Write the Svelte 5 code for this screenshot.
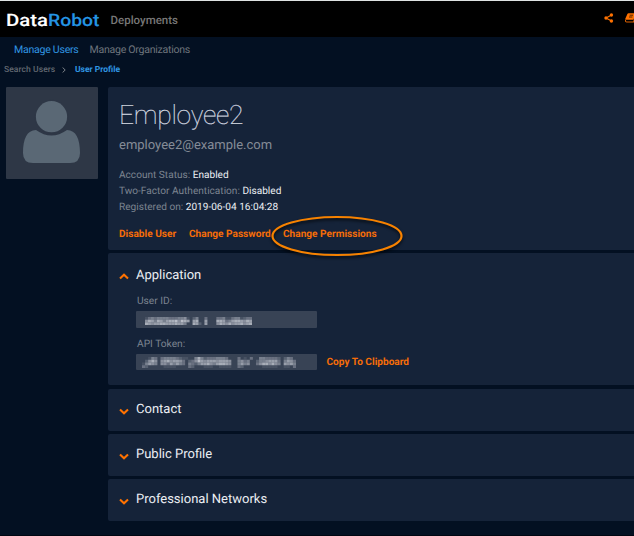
<script>
  const sections = ['Contact', 'Public Profile', 'Professional Networks'];
  // Brightness levels 0-9 of each 3px cell of the redacted values
  const userId = [
    '134344443334451024003000334113441233',
    '576476467785876067006000776346776576',
    '765667766676640076206000576575667567'
  ];
  const token = [
    '00143034444321100474233344430003010300443333202430',
    '02575056756653023586566656665004534002445666304653',
    '14654055364643043246675467765004645003577575406564',
    '32000001111000032000111001111003200000011111001103'
  ];
</script>

{#snippet mosaic(rows, w, h)}
  <svg class="mosaic" width={w} height={h} viewBox={`0 0 ${rows[0].length * 3} ${rows.length * 3}`} preserveAspectRatio="none" aria-hidden="true">
    {#each rows as row, y}
      {#each row.split('') as v, x}
        <rect x={x * 3} y={y * 3} width="3" height="3" fill="#d9dce3" opacity={v / 10} />
      {/each}
    {/each}
  </svg>
{/snippet}

{#snippet chevron(up)}
  <svg class="chevron" class:up width="10" height="7" viewBox="0 0 10 7" aria-hidden="true">
    <path d="M1 1.500 L5 5.200 L9 1.500" fill="none" stroke="#ff7200" stroke-width="2.1" />
  </svg>
{/snippet}

<div class="app">
  <header>
    <svg class="logo" width="96" height="22" viewBox="0 0 96 22">
      <text x="0" y="17" fill="#fff" stroke="#fff" textLength="42" lengthAdjust="spacingAndGlyphs">Data</text>
      <text x="42" y="17" fill="#2494e3" stroke="#2494e3" textLength="51.500" lengthAdjust="spacingAndGlyphs">Robot</text>
    </svg>
    <span class="dep">Deployments</span>
    <div class="tools">
      <svg width="10" height="10" viewBox="0 0 10 10">
        <path d="M7.500 2 L2 5 L7.500 8" fill="none" stroke="#ff7200" stroke-width="1.100" />
        <circle cx="7.400" cy="2" r="1.700" fill="#ff7200" /><circle cx="2" cy="5" r="1.700" fill="#ff7200" /><circle cx="7.400" cy="8" r="1.700" fill="#ff7200" />
      </svg>
      <svg width="12" height="10" viewBox="0 0 12 10">
        <path d="M3.500 .3 H10.500 L8.500 6.800 H1 Q0 6.800 .3 5.700 L2.400 1 Q2.700 .3 3.500 .3Z" fill="#ff7200" />
        <path d="M4.600 2.200 H8 M4 4 H7.400" stroke="#401c00" stroke-width=".9" />
        <path d="M.5 7 Q.2 9 1.800 9 H8.500 L10.800 2.500" fill="none" stroke="#d95f00" stroke-width="1.100" />
      </svg>
    </div>
  </header>
  <nav class="tabs"><span class="on">Manage Users</span><span class="orgs">Manage Organizations</span></nav>
  <nav class="crumbs">
    <span>Search Users</span>
    <svg width="4" height="6" viewBox="0 0 4 6"><path d="M.6 .5 L3.200 3 L.6 5.500" fill="none" stroke="#7d8289" /></svg>
    <b>User Profile</b>
  </nav>
  <main>
    <div class="avatar">
      <svg width="92" height="92" viewBox="0 0 92 92">
        <path d="M30 43 C21 43 17 52 17 66 Q17 76 27 76 H64 Q74 76 74 66 C74 52 70 43 61 43 Q45.500 54 30 43Z" fill="#5a6875" />
        <circle cx="45.500" cy="29.700" r="17" fill="#2e3746" />
        <circle cx="45.500" cy="29.700" r="15.600" fill="#5a6875" />
      </svg>
    </div>
    <div class="panels">
      <section class="profile">
        <h1>Employee2</h1>
        <div class="email">employee2@example.com</div>
        <div class="facts">
          <div>Account Status: <em>Enabled</em></div>
          <div>Two-Factor Authentication: <em>Disabled</em></div>
          <div>Registered on: <em>2019-06-04 16:04:28</em></div>
        </div>
        <div class="actions">
          <b class="link disable">Disable User</b><b class="link password">Change Password</b>
          <b class="link perm">Change Permissions
            <svg class="ring" width="138" height="50" viewBox="0 0 138 50"><ellipse cx="67" cy="22" rx="64.500" ry="19" fill="none" stroke="#f78200" stroke-width="2.200" /></svg>
          </b>
        </div>
      </section>
      <section class="application">
        <div class="heading">{@render chevron(true)}<h2>Application</h2></div>
        <div class="label">User ID:</div>
        <div class="row"><div class="field id">{@render mosaic(userId, 107, 8)}</div></div>
        <div class="label second">API Token:</div>
        <div class="row"><div class="field token">{@render mosaic(token, 154, 11)}</div><b class="link copy">Copy To Clipboard</b></div>
      </section>
      {#each sections as title}
        <section class="closed"><div class="heading">{@render chevron(false)}<h2>{title}</h2></div></section>
      {/each}
    </div>
  </main>
</div>

<style>
  :global(body) { margin: 0; background: #031022; }
  .app { box-sizing: border-box; width: 634px; height: 536px; overflow: hidden; background: #031022; border-top: 1px solid #dfe3e3; border-bottom: 1px solid #000612; font-family: Roboto, "Liberation Sans", sans-serif; white-space: nowrap; text-rendering: geometricPrecision; }
  header { height: 36px; background: #000; display: flex; align-items: center; padding-left: 5.500px; }
  .logo { flex: none; margin-top: 1px; }
  .logo text { font: 500 17px Roboto, sans-serif; stroke-width: .1px; }
  .dep { width: 70px; margin-left: 9px; margin-top: 2px; font-size: 11.500px; font-weight: 500; color: #777; }
  .tools { margin-left: auto; display: flex; gap: 11px; margin-right: -3px; margin-top: -2px; }
  .tabs { display: flex; padding-left: 14px; height: 25px; line-height: 26px; font-size: 10.600px; color: #6e747c; }
  .tabs .on { color: #3096e2; width: 75.500px; letter-spacing: -.28px; }
  .orgs { letter-spacing: -.28px; }
  .crumbs { display: flex; align-items: center; height: 14px; padding: 1px 0 0 4px; margin-bottom: -1px; font-size: 8.500px; font-weight: 500; color: #626871; }
  .crumbs span { width: 51px; letter-spacing: .08px; }
  .crumbs svg { margin: 0 9px 0 7px; }
  .crumbs b { color: #3096e2; }
  main { display: flex; padding: 11px 0 0 6px; }
  .avatar { width: 92px; height: 92px; background: #2e3746; border-radius: 1px; flex: none; }
  .panels { margin-left: 10px; flex: 1; display: flex; flex-direction: column; }
  section { box-sizing: border-box; background: #152339; border-radius: 2px 0 0 2px; }
  .profile { height: 163px; padding: 13px 0 0 11px; margin-bottom: 3px; }
  h1 { margin: 0; font-size: 26.500px; line-height: 32px; font-weight: 100; letter-spacing: -.3px; color: #d5dae2; -webkit-text-stroke: .2px #d5dae2; }
  .email { font-size: 13px; line-height: 16px; margin-top: 6px; color: #858c97; }
  .facts { margin-top: 14px; font-size: 10.100px; line-height: 16px; color: #7c8490; }
  em { font-style: normal; color: #eceff4; }
  .actions { display: flex; margin-top: 12px; line-height: 14px; }
  .link { font-size: 10.100px; color: #f66d08; font-weight: 700; }
  .disable { width: 70px; }
  .password { width: 94px; }
  .perm { position: relative; }
  .ring { position: absolute; left: -13px; top: -14px; filter: drop-shadow(0 2px 1.500px #000b); }
  .application { height: 132px; padding-top: 15px; margin-bottom: 4px; }
  .heading { display: flex; align-items: center; padding-left: 11px; }
  h2 { margin: 0 0 0 7px; font-size: 13px; line-height: 16px; font-weight: 400; color: #eceff4; }
  .chevron { position: relative; top: 1px; }
  .up { top: 0; transform: scaleY(-1); }
  .label { margin: 11px 0 2px 29px; line-height: 14px; font-size: 10.200px; color: #7c8490; }
  .label.second { margin-top: 10px; }
  .row { display: flex; align-items: center; padding-left: 28px; }
  .field { box-sizing: border-box; width: 181px; height: 17px; background: #384355; border-radius: 1px; }
  .id { padding: 5.500px 0 0 9px; }
  .token { height: 16px; padding: 3px 0 0 6px; }
  .mosaic { display: block; }
  .copy { margin-left: 9.500px; }
  .closed { height: 42px; padding-top: 13px; margin-bottom: 3px; }
</style>
